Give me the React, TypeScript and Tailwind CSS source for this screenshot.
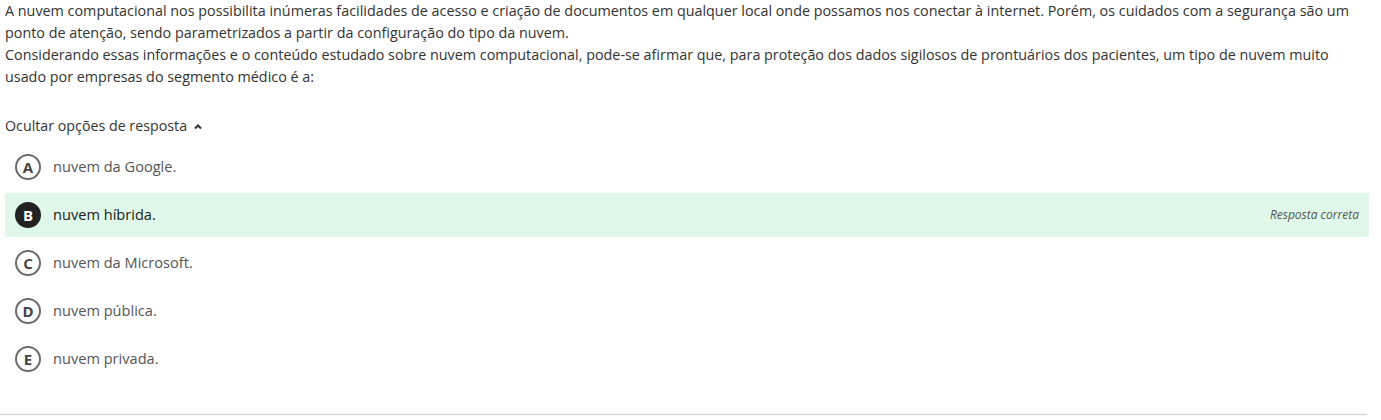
const options = [
  { letter: "A", text: "nuvem da Google." },
  { letter: "B", text: "nuvem híbrida.", correct: true },
  { letter: "C", text: "nuvem da Microsoft." },
  { letter: "D", text: "nuvem pública." },
  { letter: "E", text: "nuvem privada." },
];

function ChevronUp() {
  return (
    <svg width="10" height="10" viewBox="0 0 10 10" className="ml-[6px] mt-[2px]">
      <path d="M2 6.5 L5 3.5 L8 6.5" fill="none" stroke="#333" strokeWidth="2" />
    </svg>
  );
}

export default function App() {
  return (
    <div className="w-[1381px] h-[420px] bg-white font-['Open_Sans',sans-serif] text-[#333]">
      <div className="w-[1369px] pl-[5px]">
        <p className="w-[1362px] text-[14.35px] leading-[22px]">
          A nuvem computacional nos possibilita inúmeras facilidades de acesso e criação de documentos em qualquer local onde possamos nos conectar à internet. Porém, os cuidados com a segurança são um ponto de atenção, sendo parametrizados a partir da configuração do tipo da nuvem.
          <br />
          Considerando essas informações e o conteúdo estudado sobre nuvem computacional, pode-se afirmar que, para proteção dos dados sigilosos de prontuários dos pacientes, um tipo de nuvem muito usado por empresas do segmento médico é a:
        </p>

        <button className="mt-[27px] flex items-center text-[14.25px] leading-[22px] text-[#333]">
          Ocultar opções de resposta
          <ChevronUp />
        </button>

        <ul className="mt-[8px] flex flex-col gap-[4px]">
          {options.map((o) => (
            <li
              key={o.letter}
              className={`flex h-[44px] items-center pl-[10px] pr-[10px] ${o.correct ? "bg-[#e0f8e9]" : ""}`}
            >
              {o.correct ? (
                <span className="flex h-[26px] w-[26px] items-center justify-center rounded-full bg-[#222] text-[15px] font-bold text-white">
                  {o.letter}
                </span>
              ) : (
                <span className="flex h-[26px] w-[26px] items-center justify-center rounded-full border-2 border-[#6b6b6b] text-[15px] font-bold text-[#444]">
                  {o.letter}
                </span>
              )}
              <span className={`ml-[12px] text-[14.6px] ${o.correct ? "text-[#222]" : "text-[#555]"}`}>
                {o.text}
              </span>
              {o.correct && (
                <span className="ml-auto text-[12px] italic text-[#555]">Resposta correta</span>
              )}
            </li>
          ))}
        </ul>
      </div>
      <div className="mt-[33px] h-px w-[1367px] bg-[#cfcfcf]" />
    </div>
  );
}
